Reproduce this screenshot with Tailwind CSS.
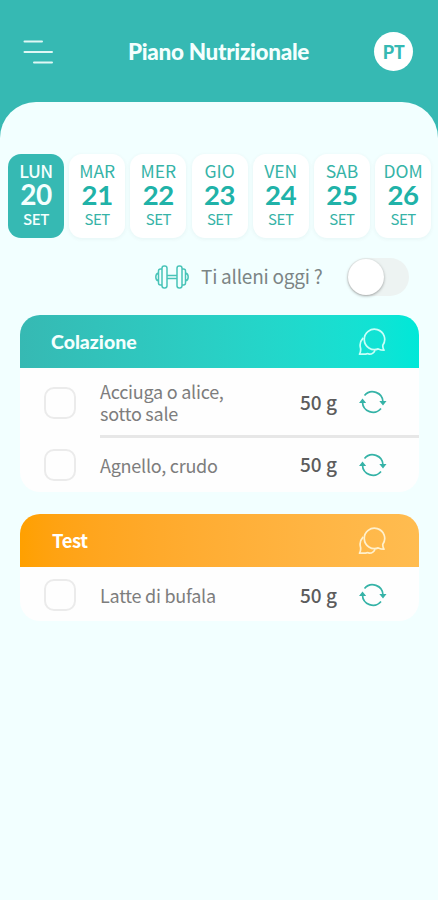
<!DOCTYPE html>
<html lang="it">
<head>
<meta charset="utf-8">
<meta name="viewport" content="width=device-width, initial-scale=1">
<title>Piano Nutrizionale</title>
<script src="https://cdn.jsdelivr.net/npm/@tailwindcss/browser@4"></script>
</head>
<body class="h-[900px] overflow-hidden bg-[#36b9b3] font-['Noto_Sans_CJK_JP',sans-serif]">
<svg class="hidden">
  <symbol id="chat" viewBox="0 0 28 28"><g fill="none" stroke="currentColor" stroke-width="1.7" stroke-linejoin="round"><path d="M24.8 17.300A10.200 10.200 0 1 0 20.200 20.900Q23 22.200 26 22.200Q24.600 20 24.800 17.300Z"/><path d="M5.200 9.800Q.8 14.500 2.600 20.400Q3 24 1.500 26.200H7.500Q9.500 25.200 11.500 26.200Q15.500 26.200 17 22.300"/></g></symbol>
  <symbol id="swap" viewBox="0 0 28 26"><g fill="none" stroke="currentColor" stroke-width="1.7"><path d="M5.500 6.500A10.500 10.500 0 0 1 24 13"/><path d="M22 19.500A10.500 10.500 0 0 1 3.500 13"/></g><path fill="currentColor" d="M20.300 12H27.500L24 16.600ZM0 14L3.500 9.400L7.200 14Z"/></symbol>
</svg>
<header class="flex h-[102px] items-center justify-between pt-px pr-[25px] pl-[23px]">
  <svg class="h-[26px] w-[30px]" viewBox="0 0 30 26" fill="none" stroke="#dff8f5" stroke-width="2" stroke-linecap="round"><path d="M1.500 2.500H19M1.500 13H29M11 23.500H29"/></svg>
  <h1 class="ml-[10px] font-['Lato',sans-serif] text-[22.500px] leading-7 font-black whitespace-nowrap text-[#f4fffe] tracking-[-0.3px]">Piano Nutrizionale</h1>
  <div class="flex size-[39px] items-center justify-center rounded-full bg-white pb-px text-[18px] leading-none font-bold tracking-[-0.5px] text-[#36b9b3]">PT</div>
</header>
<main class="h-[798px] rounded-t-[36px] bg-[#f2ffff] pt-[52px]">
  <div class="flex gap-[5.200px] pl-[8px] text-center text-[#36b3a7]">
    <div class="flex h-[84px] w-14 shrink-0 flex-col items-center rounded-[13px] bg-[#36b9b3] pt-[6px] text-[#f4fffe]"><span class="text-[17.500px] leading-[22px] tracking-[-0.5px] font-medium">LUN</span><b class="font-['Lato',sans-serif] text-[28px] leading-[25px] tracking-[-0.5px]">20</b><span class="text-[15px] leading-[24px] tracking-[-0.5px] font-medium">SET</span></div>
    <div class="flex h-[84px] w-14 shrink-0 flex-col items-center rounded-[13px] bg-white pt-[6px] shadow-[0_1px_4px_rgba(0,60,60,0.06)]"><span class="text-[17.500px] leading-[22px]">MAR</span><b class="font-['Lato',sans-serif] text-[27.500px] leading-[25px] tracking-[-0.3px] text-[#20b2a8]">21</b><span class="text-[15px] leading-[24px] tracking-[-0.5px]">SET</span></div>
    <div class="flex h-[84px] w-14 shrink-0 flex-col items-center rounded-[13px] bg-white pt-[6px] shadow-[0_1px_4px_rgba(0,60,60,0.06)]"><span class="text-[17.500px] leading-[22px]">MER</span><b class="font-['Lato',sans-serif] text-[27.500px] leading-[25px] tracking-[-0.3px] text-[#20b2a8]">22</b><span class="text-[15px] leading-[24px] tracking-[-0.5px]">SET</span></div>
    <div class="flex h-[84px] w-14 shrink-0 flex-col items-center rounded-[13px] bg-white pt-[6px] shadow-[0_1px_4px_rgba(0,60,60,0.06)]"><span class="text-[17.500px] leading-[22px]">GIO</span><b class="font-['Lato',sans-serif] text-[27.500px] leading-[25px] tracking-[-0.3px] text-[#20b2a8]">23</b><span class="text-[15px] leading-[24px] tracking-[-0.5px]">SET</span></div>
    <div class="flex h-[84px] w-14 shrink-0 flex-col items-center rounded-[13px] bg-white pt-[6px] shadow-[0_1px_4px_rgba(0,60,60,0.06)]"><span class="text-[17.500px] leading-[22px]">VEN</span><b class="font-['Lato',sans-serif] text-[27.500px] leading-[25px] tracking-[-0.3px] text-[#20b2a8]">24</b><span class="text-[15px] leading-[24px] tracking-[-0.5px]">SET</span></div>
    <div class="flex h-[84px] w-14 shrink-0 flex-col items-center rounded-[13px] bg-white pt-[6px] shadow-[0_1px_4px_rgba(0,60,60,0.06)]"><span class="text-[17.500px] leading-[22px]">SAB</span><b class="font-['Lato',sans-serif] text-[27.500px] leading-[25px] tracking-[-0.3px] text-[#20b2a8]">25</b><span class="text-[15px] leading-[24px] tracking-[-0.5px]">SET</span></div>
    <div class="flex h-[84px] w-14 shrink-0 flex-col items-center rounded-[13px] bg-white pt-[6px] shadow-[0_1px_4px_rgba(0,60,60,0.06)]"><span class="text-[17.500px] leading-[22px]">DOM</span><b class="font-['Lato',sans-serif] text-[27.500px] leading-[25px] tracking-[-0.3px] text-[#20b2a8]">26</b><span class="text-[15px] leading-[24px] tracking-[-0.5px]">SET</span></div>
  </div>
  <div class="flex h-[77px] items-center pl-[155px]">
    <svg class="h-[24px] w-[34px] shrink-0" viewBox="0 0 34 24" fill="none" stroke="#48c4b8" stroke-width="1.500"><rect x="7" y="1" width="5" height="22" rx="2.200"/><rect x="22" y="1" width="5" height="22" rx="2.200"/><path d="M7 4H5.500Q3.500 4 3.500 6V18Q3.500 20 5.500 20H7M27 4H28.500Q30.500 4 30.500 6V18Q30.500 20 28.500 20H27M3.500 8Q.8 8.500 .8 12T3.500 16M30.500 8Q33.200 8.500 33.200 12T30.500 16M12 10.500H22M12 13.500H22"/></svg>
    <span class="mb-px ml-[12px] w-[146px] text-[19px] leading-6 tracking-[-0.25px] whitespace-nowrap text-[#7c8585]">Ti alleni oggi ?</span>
    <div class="h-[38px] w-[62px] rounded-full bg-[#edf3f2] p-px"><div class="size-[36px] rounded-full bg-white shadow-[0_1px_3px_rgba(0,0,0,0.35)]"></div></div>
  </div>
  <section class="mr-[19px] ml-5 h-[177px] overflow-hidden rounded-[20px] bg-[#fefefe]">
    <div class="flex h-[53px] items-center justify-between bg-linear-to-r from-[#36b9b3] to-[#00e8d8] pr-[33px] pl-[31px] text-[#c8fff8]"><h2 class="font-['Lato',sans-serif] text-[19.500px] font-black text-[#f4fffe]">Colazione</h2><svg class="size-7"><use href="#chat"/></svg></div>
    <div class="flex h-[67px] items-center pl-[24px]"><div class="mt-[3px] size-8 rounded-[10px] border-2 border-[#ebebeb]"></div><p class="ml-[24px] w-[200px] text-[18px] leading-[22px] tracking-[-0.25px] text-[#7d7d7d]">Acciuga o alice,<br>sotto sale</p><span class="mt-[2px] w-[59px] text-[19px] font-medium whitespace-nowrap text-[#5c5c5c]">50 g</span><svg class="mt-px h-[26px] w-[28px] text-[#36b3a7]"><use href="#swap"/></svg></div>
    <div class="ml-[80px] h-[3px] bg-[#e7e7e7]"></div>
    <div class="flex h-[54px] items-center pl-[24px]"><div class="size-8 rounded-[10px] border-2 border-[#ebebeb]"></div><p class="-mt-px ml-[24px] w-[200px] text-[18px] leading-[22px] tracking-[-0.25px] text-[#7d7d7d]">Agnello, crudo</p><span class="-mt-px w-[59px] text-[19px] font-medium whitespace-nowrap text-[#5c5c5c]">50 g</span><svg class="-mt-px h-[26px] w-[28px] text-[#36b3a7]"><use href="#swap"/></svg></div>
  </section>
  <section class="mt-[22px] mr-[19px] ml-5 h-[107px] overflow-hidden rounded-[20px] bg-[#fefefe]">
    <div class="flex h-[53px] items-center justify-between bg-linear-to-r from-[#ffa000] to-[#ffbc50] pr-[33px] pl-[32px] text-[#fff0cc]"><h2 class="text-[18.500px] font-bold tracking-[-0.4px] text-white">Test</h2><svg class="size-7"><use href="#chat"/></svg></div>
    <div class="flex h-[54px] items-center pl-[24px]"><div class="mt-px size-8 rounded-[10px] border-2 border-[#ebebeb]"></div><p class="mt-[2px] ml-[24px] w-[200px] text-[18px] leading-[22px] tracking-[-0.25px] text-[#7d7d7d]">Latte di bufala</p><span class="mt-[2px] w-[59px] text-[19px] font-medium whitespace-nowrap text-[#5c5c5c]">50 g</span><svg class="mt-px h-[26px] w-[28px] text-[#36b3a7]"><use href="#swap"/></svg></div>
  </section>
</main>
</body>
</html>
